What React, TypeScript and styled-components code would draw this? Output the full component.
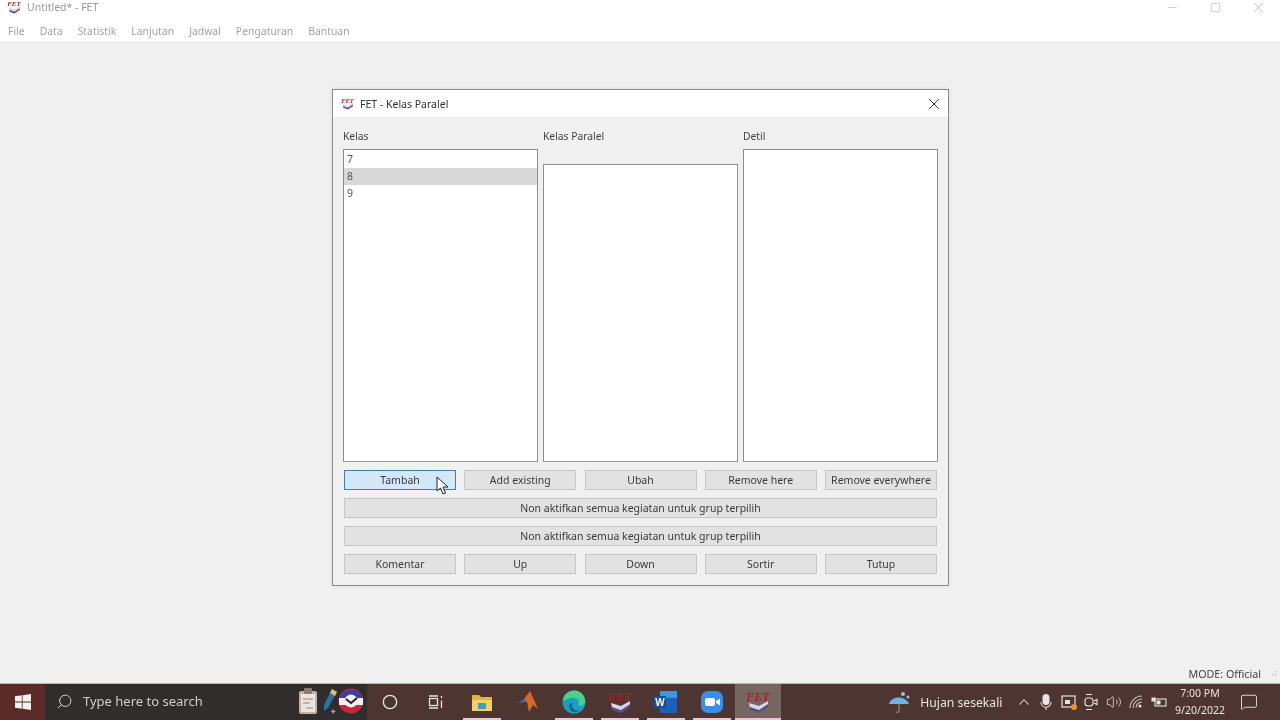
import React from 'react';
import styled, { createGlobalStyle } from 'styled-components';
import { Search, ChevronUp, Volume2, MessageSquare, X, Minus, Square, Circle } from 'lucide-react';

const GlobalStyle = createGlobalStyle`
  html, body { margin: 0; padding: 0; background: #f0f0f0; }
  body { font-family: "Noto Sans", "Open Sans", sans-serif; }
  * { box-sizing: border-box; }
`;

const Page = styled.div`
  width: 1280px;
  height: 720px;
  display: flex;
  flex-direction: column;
  overflow: hidden;
  filter: blur(0.4px);
`;

// MAIN WINDOW

const TitleBar = styled.div`
  height: 22px;
  flex: none;
  background: #fff;
  display: flex;
  align-items: flex-start;
  color: #9a9a9a;
  font-size: 10.5px;
  line-height: 14px;
`;

const TitleIcon = styled.div`
  width: 27px;
  padding-left: 7px;
  height: 14px;
  display: flex;
  align-items: flex-start;
`;

const TitleText = styled.div`
  flex: 1;
`;

const WindowControls = styled.div`
  display: flex;
  color: #aaa;
`;

const WindowControl = styled.div`
  width: 43px;
  height: 14px;
  display: flex;
  align-items: center;
  justify-content: center;
`;

const MenuBar = styled.div`
  height: 19px;
  flex: none;
  background: #fff;
  display: flex;
  align-items: center;
  gap: 15px;
  padding: 0 0 2px 8px;
  color: #a2a2a2;
  font-size: 10.4px;
`;

const Workspace = styled.div`
  flex: 1;
  background: #f0f0f0;
  display: flex;
  flex-direction: column;
  align-items: center;
  padding-top: 48px;
`;

const StatusBar = styled.div`
  margin-top: auto;
  align-self: stretch;
  height: 18px;
  display: flex;
  align-items: center;
  justify-content: flex-end;
  font-size: 10.7px;
  color: #444;
`;

const SizeGrip = styled.svg`
  width: 19px;
  height: 18px;
  flex: none;
`;

// DIALOG

const Dialog = styled.div`
  width: 617px;
  height: 497px;
  margin-left: 1px;
  background: #f0f0f0;
  border: 1px solid #8a8a8a;
  box-shadow: 0 0 5px rgba(0, 0, 0, 0.08);
  display: flex;
  flex-direction: column;
`;

const DialogTitle = styled.div`
  height: 27px;
  background: #fff;
  display: flex;
  align-items: center;
  padding: 0 5px 0 8px;
  gap: 6px;
  font-size: 10.5px;
  color: #333;
`;

const DialogTitleText = styled.div`
  flex: 1;
`;

const DialogBody = styled.div`
  flex: 1;
  padding: 12px 10px 0 10px;
  display: flex;
  flex-direction: column;
`;

const Columns = styled.div`
  height: 333px;
  display: grid;
  grid-template-columns: 195px 195px 195px;
  column-gap: 5px;
`;

const Column = styled.div`
  display: flex;
  flex-direction: column;
`;

const Label = styled.div<{ $height: number }>`
  height: ${p => p.$height}px;
  font-size: 10.3px;
  line-height: 15px;
  color: #444;
`;

const ListBox = styled.div`
  flex: 1;
  background: #fff;
  border: 1px solid #8c8c8c;
  border-bottom-color: #9a9a9a;
  padding-top: 1px;
`;

const ListItem = styled.div<{ $selected?: boolean }>`
  height: 17px;
  line-height: 17px;
  padding-left: 3px;
  font-size: 10.5px;
  color: #555;
  background: ${p => (p.$selected ? '#d9d9d9' : 'transparent')};
`;

const ButtonRows = styled.div`
  margin-top: 8px;
  padding: 0 1px;
  display: flex;
  flex-direction: column;
  gap: 8px;
`;

const ButtonRow = styled.div`
  display: grid;
  grid-template-columns: 112px 112px 112px 112px 112px;
  justify-content: space-between;
`;

const Button = styled.div<{ $active?: boolean }>`
  position: relative;
  height: 20px;
  display: flex;
  align-items: center;
  justify-content: center;
  font-size: 10.5px;
  color: #3a3a3a;
  background: ${p => (p.$active ? '#d2e7f8' : '#e2e2e2')};
  border: 1px solid ${p => (p.$active ? '#3f7fb0' : '#c6c6c6')};
`;

const Cursor = styled.svg`
  position: absolute;
  left: 91px;
  top: 5px;
`;

// TASKBAR

const Taskbar = styled.div`
  height: 37px;
  flex: none;
  background: #4d3531;
  border-top: 1px solid #b9b6b3;
  display: flex;
  align-items: center;
  color: #e8e4e2;
`;

const StartButton = styled.div`
  width: 45px;
  height: 100%;
  background: #5a2b29;
  display: flex;
  align-items: center;
  justify-content: center;
`;

const SearchBox = styled.div`
  width: 322px;
  height: 100%;
  background: #2f2e2d;
  display: flex;
  align-items: center;
  padding: 0 0 2px 11px;
  gap: 10px;
  font-size: 13px;
  color: #cfcfcf;
`;

const SearchText = styled.div`
  width: 203px;
  white-space: nowrap;
`;

const SearchApps = styled.div`
  display: flex;
  align-items: center;
  margin-left: 2px;
`;

const AppSlot = styled.div<{ $active?: boolean; $running?: boolean }>`
  position: relative;
  width: 46px;
  height: 100%;
  display: flex;
  align-items: center;
  justify-content: center;
  background: ${p => (p.$active ? '#776660' : 'transparent')};

  &::after {
    content: '';
    display: ${p => (p.$running ? 'block' : 'none')};
    position: absolute;
    left: ${p => (p.$active ? '0' : '4px')};
    right: ${p => (p.$active ? '0' : '4px')};
    bottom: 0;
    height: 2px;
    background: #e8c6dc;
  }
`;

const Tray = styled.div`
  margin-left: auto;
  padding-right: 7px;
  display: flex;
  align-items: center;
  height: 100%;
`;

const Weather = styled.div`
  display: flex;
  align-items: center;
  gap: 8px;
  font-size: 12.2px;
  margin-right: 10px;
`;

const TrayIcon = styled.div`
  width: 22.5px;
  display: flex;
  align-items: center;
  justify-content: center;
`;

const Clock = styled.div`
  width: 50px;
  margin-left: 5px;
  text-align: center;
  font-size: 10.5px;
  line-height: 17px;
  white-space: nowrap;
`;

const Notify = styled.div`
  width: 48px;
  display: flex;
  align-items: center;
  justify-content: center;
`;

// ICONS

const FetIcon = ({ size }: { size: number }) => (
  <svg width={size} height={size} viewBox="0 0 24 24">
    <text x="12" y="11" textAnchor="middle" fontSize="12" fontWeight="700" fontStyle="italic" fontFamily="Liberation Serif, serif" fill="#a3232b">FET</text>
    <path d="M3 13 L13 16 L22 11 L22 15 L13 21 L4 18 Z" fill="#d9d6ea" />
    <path d="M4 17 L13 20 L22 14 L22 17 L13 23 L4 20 Z" fill="#57508c" />
  </svg>
);

const WindowsLogo = () => (
  <svg width="16" height="16" viewBox="0 0 16 16" fill="#f5f2f0">
    <path d="M0 2.3 L6.8 1.3 V7.5 H0 Z M7.6 1.2 L16 0 V7.5 H7.6 Z M0 8.4 H6.8 V14.7 L0 13.7 Z M7.6 8.4 H16 V16 L7.6 14.8 Z" />
  </svg>
);

const Clipboard = () => (
  <svg width="20" height="28" viewBox="0 0 20 28">
    <rect x="1" y="4" width="18" height="23" rx="2" fill="#c9b0a4" />
    <rect x="3" y="7" width="14" height="18" fill="#ece4df" />
    <rect x="6" y="1" width="8" height="6" rx="1" fill="#8f7a70" />
    <path d="M5 12 H15 M5 16 H12 M8 21 H15" stroke="#8f8580" strokeWidth="1" />
  </svg>
);

const Pen = () => (
  <svg width="20" height="28" viewBox="-4 0 20 28">
    <path d="M10 2 L15 5 L6 21 L2 24 L2 18 Z" fill="#2f6f9f" />
    <path d="M10 2 L15 5 L13 9 L8 6 Z" fill="#d9c26a" />
    <path d="M11 22 l1.5 2 2 .5 -2 .5 -1.5 2 -1 -2 -2 -.5 2 -.5 Z" fill="#c58bd8" />
  </svg>
);

const ClockApp = () => (
  <svg width="26" height="26" viewBox="0 0 26 26">
    <circle cx="13" cy="13" r="12.5" fill="#c4283c" />
    <path d="M1.5 10 A12 12 0 0 1 24.5 10 Z" fill="#3c3f9c" />
    <path d="M1 10 H25 V17 H1 Z" fill="#f2eef2" />
    <circle cx="13" cy="13" r="6.5" fill="#f2eef2" />
    <path d="M8 11 L13 15 L19 10" stroke="#222" strokeWidth="2" fill="none" />
  </svg>
);

const TaskView = () => (
  <svg width="16" height="14" viewBox="0 0 16 14" fill="none" stroke="#e8e4e2" strokeWidth="1.3">
    <path d="M1 1 H10 M1 13 H10" />
    <rect x="1.5" y="3.5" width="8" height="7" />
    <path d="M13.5 1 V3 M13.5 5.5 V13" />
  </svg>
);

const Explorer = () => (
  <svg width="22" height="19" viewBox="0 0 22 19">
    <path d="M1 2 H8 L10 4 H21 V17 H1 Z" fill="#e5b43c" />
    <rect x="1" y="7" width="20" height="11" fill="#f3d166" />
    <rect x="7" y="10" width="8" height="6" fill="#3f9bc4" />
  </svg>
);

const Matlab = () => (
  <svg width="22" height="24" viewBox="0 0 22 24">
    <path d="M1 13 L7 9 L10 12 Z" fill="#3b6ea5" />
    <path d="M7 9 L13 1 L21 19 L16 15 L12 22 L10 12 Z" fill="#d9652b" />
  </svg>
);

const Edge = () => (
  <svg width="24" height="24" viewBox="0 0 24 24">
    <circle cx="12" cy="12" r="11.5" fill="#1a9fc0" />
    <path d="M1 11 A11 11 0 0 1 23 12 C23 16 17 17 16 14 C18 13 17 8 12 8 C6 8 4 10 1 11 Z" fill="#4fce8e" />
    <path d="M10 13 C9 18 13 22 18 20 C14 24 7 22 7 16 C7 14 8 13 10 13 Z" fill="#0c5f9e" />
  </svg>
);

const Word = () => (
  <svg width="24" height="22" viewBox="0 0 24 22">
    <rect x="6" y="0" width="17" height="22" rx="1" fill="#1f5fb5" />
    <rect x="6" y="0" width="17" height="7" fill="#3d96e0" />
    <rect x="0" y="5" width="12" height="12" rx="1" fill="#174f9f" />
    <text x="6" y="14.5" textAnchor="middle" fontSize="10" fontWeight="700" fontFamily="Liberation Sans, sans-serif" fill="#fff">W</text>
  </svg>
);

const Zoom = () => (
  <svg width="22" height="22" viewBox="0 0 22 22">
    <rect width="22" height="22" rx="7" fill="#3c8cec" />
    <rect x="4" y="7" width="10" height="8" rx="2" fill="#fff" />
    <path d="M15 10 L19 7.5 V14.5 L15 12 Z" fill="#fff" />
  </svg>
);

const Umbrella = () => (
  <svg width="24" height="24" viewBox="0 0 24 24">
    <circle cx="15" cy="4" r="2" fill="#9fc4dc" />
    <circle cx="20" cy="7" r="1.5" fill="#9fc4dc" />
    <path d="M1 14 C3 6 17 5 21 14 Z" fill="#6cb4e6" />
    <path d="M11 14 V21 C11 23 8 23 8 21" stroke="#9a8a84" strokeWidth="1.2" fill="none" />
  </svg>
);

const MicIcon = () => (
  <svg width="12" height="18" viewBox="0 0 12 18" fill="none">
    <rect x="2.5" y="1" width="7" height="11" rx="3.5" fill="#e8e4e2" />
    <path d="M1 9 C1 16 11 16 11 9 M6 14 V17" stroke="#e8e4e2" strokeWidth="1.1" />
  </svg>
);

const MeetIcon = () => (
  <svg width="16" height="16" viewBox="0 0 16 16" fill="none">
    <rect x="1" y="2" width="13" height="11" stroke="#e8e4e2" strokeWidth="1.2" />
    <rect x="4" y="6" width="5" height="4" fill="#e8e4e2" />
    <circle cx="13" cy="13" r="3" fill="#e8952c" />
  </svg>
);

const CameraIcon = () => (
  <svg width="14" height="18" viewBox="0 0 14 18" fill="none" stroke="#e8e4e2" strokeWidth="1.1">
    <path d="M2 1.5 H8 M2 16.5 H8" />
    <rect x="1" y="5" width="8" height="8" rx="3" />
    <path d="M10 8 L13 6.5 V11.5 L10 10" />
  </svg>
);

const WifiIcon = () => (
  <svg width="14" height="14" viewBox="0 0 14 14" fill="none" stroke="#c9c2bf" strokeWidth="1.1">
    <path d="M1 13 A12 12 0 0 1 13 1 M4 13 A9 9 0 0 1 13 4 M7 13 A6 6 0 0 1 13 7" />
    <circle cx="11" cy="11" r="1.5" fill="#e8e4e2" stroke="none" />
  </svg>
);

const BatteryIcon = () => (
  <svg width="16" height="12" viewBox="0 0 16 12" fill="none" stroke="#e8e4e2" strokeWidth="1.1">
    <rect x="4" y="3" width="11" height="7" />
    <rect x="5.5" y="4.5" width="4" height="4" fill="#e8e4e2" stroke="none" />
    <path d="M1 2 H4 V5 H1 Z" fill="#e8e4e2" />
  </svg>
);

const topButtons = ['Add existing', 'Ubah', 'Remove here', 'Remove everywhere'];
const bottomButtons = ['Komentar', 'Up', 'Down', 'Sortir', 'Tutup'];
const menus = ['File', 'Data', 'Statistik', 'Lanjutan', 'Jadwal', 'Pengaturan', 'Bantuan'];
const wideLabel = 'Non aktifkan semua kegiatan untuk grup terpilih';

const App = () => (
  <Page>
    <GlobalStyle />
    <TitleBar>
      <TitleIcon><FetIcon size={14} /></TitleIcon>
      <TitleText>Untitled* - FET</TitleText>
      <WindowControls>
        <WindowControl><Minus size={13} strokeWidth={1} /></WindowControl>
        <WindowControl><Square size={11} strokeWidth={1.2} /></WindowControl>
        <WindowControl><X size={17} strokeWidth={1} /></WindowControl>
      </WindowControls>
    </TitleBar>
    <MenuBar>
      {menus.map(m => <span key={m}>{m}</span>)}
    </MenuBar>

    <Workspace>
      <Dialog>
        <DialogTitle>
          <FetIcon size={13} />
          <DialogTitleText>FET - Kelas Paralel</DialogTitleText>
          <X size={18} strokeWidth={1.2} color="#222" />
        </DialogTitle>
        <DialogBody>
          <Columns>
            <Column>
              <Label $height={20}>Kelas</Label>
              <ListBox>
                <ListItem>7</ListItem>
                <ListItem $selected>8</ListItem>
                <ListItem>9</ListItem>
              </ListBox>
            </Column>
            <Column>
              <Label $height={35}>Kelas Paralel</Label>
              <ListBox />
            </Column>
            <Column>
              <Label $height={20}>Detil</Label>
              <ListBox />
            </Column>
          </Columns>
          <ButtonRows>
            <ButtonRow>
              <Button $active>
                Tambah
                <Cursor width="13" height="19" viewBox="0 0 13 19">
                  <path d="M1 1 V15 L4.5 12 L7 18 L9.5 17 L7 11 L12 11 Z" fill="#fff" stroke="#222" strokeWidth="1" />
                </Cursor>
              </Button>
              {topButtons.map(b => <Button key={b}>{b}</Button>)}
            </ButtonRow>
            <Button>{wideLabel}</Button>
            <Button>{wideLabel}</Button>
            <ButtonRow>
              {bottomButtons.map(b => <Button key={b}>{b}</Button>)}
            </ButtonRow>
          </ButtonRows>
        </DialogBody>
      </Dialog>
      <StatusBar>
        MODE: Official
        <SizeGrip viewBox="0 0 19 18" fill="#c4c4c4">
          <rect x="14" y="6" width="1.5" height="1.5" />
          <rect x="11" y="9" width="1.5" height="1.5" />
          <rect x="14" y="9" width="1.5" height="1.5" />
        </SizeGrip>
      </StatusBar>
    </Workspace>

    <Taskbar>
      <StartButton><WindowsLogo /></StartButton>
      <SearchBox>
        <Search size={17} strokeWidth={1.4} style={{ transform: 'scaleX(-1)' }} />
        <SearchText>Type here to search</SearchText>
        <SearchApps>
          <Clipboard />
          <Pen />
          <ClockApp />
        </SearchApps>
      </SearchBox>
      <AppSlot><Circle size={16} strokeWidth={2} /></AppSlot>
      <AppSlot><TaskView /></AppSlot>
      <AppSlot $running><Explorer /></AppSlot>
      <AppSlot><Matlab /></AppSlot>
      <AppSlot $running><Edge /></AppSlot>
      <AppSlot $running><FetIcon size={24} /></AppSlot>
      <AppSlot $running><Word /></AppSlot>
      <AppSlot $running><Zoom /></AppSlot>
      <AppSlot $active $running><FetIcon size={24} /></AppSlot>
      <Tray>
        <Weather>
          <Umbrella />
          <span>Hujan sesekali</span>
        </Weather>
        <TrayIcon><ChevronUp size={18} strokeWidth={1.4} /></TrayIcon>
        <TrayIcon><MicIcon /></TrayIcon>
        <TrayIcon><MeetIcon /></TrayIcon>
        <TrayIcon><CameraIcon /></TrayIcon>
        <TrayIcon><Volume2 size={16} strokeWidth={1.2} /></TrayIcon>
        <TrayIcon><WifiIcon /></TrayIcon>
        <TrayIcon><BatteryIcon /></TrayIcon>
        <Clock>7:00 PM<br />9/20/2022</Clock>
        <Notify><MessageSquare size={18} strokeWidth={1.2} /></Notify>
      </Tray>
    </Taskbar>
  </Page>
);

export default App;
